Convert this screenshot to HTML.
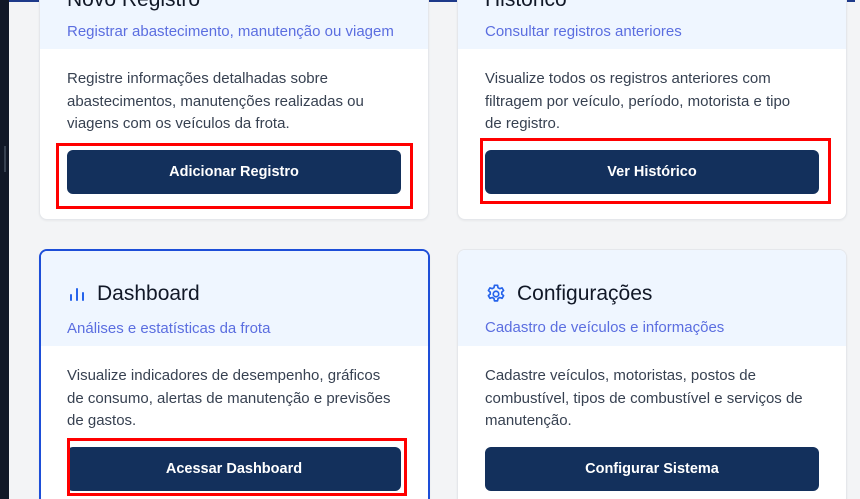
<!DOCTYPE html>
<html><head><meta charset="utf-8"><style>
*{margin:0;padding:0;box-sizing:border-box}
html,body{width:860px;height:499px;overflow:hidden;background:#f3f4f6;font-family:"Liberation Sans",sans-serif;position:relative}
.side{position:absolute;left:0;top:0;width:9px;height:499px;background:#111827}
.side i{position:absolute;left:4px;top:146px;width:2px;height:26px;background:#374151}
.topbar{position:absolute;left:9px;top:0;width:846px;height:2px;background:#1e3a8a}
.card{position:absolute;background:#fff;border:1px solid #e5e7eb;border-radius:8px;overflow:hidden;box-shadow:0 1px 2px rgba(0,0,0,.05)}
.card.sel{border:2px solid #1d4ed8}
.hd{position:absolute;left:0;top:0;right:0;background:#eff6ff}
.t{position:absolute;left:27px;font-size:21px;color:#111827;display:flex;align-items:center;gap:10px;white-space:nowrap}
.s{position:absolute;left:27px;font-size:15px;color:#5b6ee0;white-space:nowrap}
.b{position:absolute;left:27px;font-size:15px;line-height:22.5px;color:#374151;white-space:nowrap}
.sel .t,.sel .s,.sel .b{left:26px}
.btn{position:absolute;background:#13305c;color:#fff;border-radius:6px;font-weight:bold;font-size:14.5px;display:flex;align-items:center;justify-content:center}
.red{position:absolute;border:3px solid #ff0000}
</style></head><body>
<div class="side"><i></i></div>
<div class="topbar"></div>

<div class="card" style="left:39px;top:-20px;width:390px;height:240px">
  <div class="hd" style="height:68px"></div>
  <div class="t" style="top:7px">Novo Registro</div>
  <div class="s" style="top:42px">Registrar abastecimento, manutenção ou viagem</div>
  <div class="b" style="top:87px">Registre informações detalhadas sobre<br>abastecimentos, manutenções realizadas ou<br>viagens com os veículos da frota.</div>
</div>
<div class="card" style="left:457px;top:-20px;width:390px;height:240px">
  <div class="hd" style="height:68px"></div>
  <div class="t" style="top:7px">Histórico</div>
  <div class="s" style="top:42px">Consultar registros anteriores</div>
  <div class="b" style="top:87px">Visualize todos os registros anteriores com<br>filtragem por veículo, período, motorista e tipo<br>de registro.</div>
</div>

<div class="card sel" style="left:39px;top:249px;width:391px;height:270px">
  <div class="hd" style="height:95px"></div>
  <div class="t" style="top:31px"><svg width="20" height="20" viewBox="0 0 20 20"><g stroke="#2563eb" stroke-width="2" stroke-linecap="round"><line x1="4" y1="16" x2="4" y2="11"/><line x1="10" y1="16" x2="10" y2="5"/><line x1="16" y1="16" x2="16" y2="9"/></g></svg><span>Dashboard</span></div>
  <div class="s" style="top:69px">Análises e estatísticas da frota</div>
  <div class="b" style="top:114px">Visualize indicadores de desempenho, gráficos<br>de consumo, alertas de manutenção e previsões<br>de gastos.</div>
</div>
<div class="card" style="left:457px;top:249px;width:390px;height:270px">
  <div class="hd" style="height:96px"></div>
  <div class="t" style="top:32px"><svg width="22" height="22" viewBox="0 0 24 24" fill="none" stroke="#2563eb" stroke-width="1.8" stroke-linejoin="round"><path d="M10.3 2.5h3.4l.5 2.6 1.9 1.1 2.5-.9 1.7 2.9-2 1.7v2.2l2 1.7-1.7 2.9-2.5-.9-1.9 1.1-.5 2.6h-3.4l-.5-2.6-1.9-1.1-2.5.9-1.7-2.9 2-1.7v-2.2l-2-1.7 1.7-2.9 2.5.9 1.9-1.1z"/><circle cx="12" cy="12" r="3"/></svg><span>Configurações</span></div>
  <div class="s" style="top:69px">Cadastro de veículos e informações</div>
  <div class="b" style="top:115px">Cadastre veículos, motoristas, postos de<br>combustível, tipos de combustível e serviços de<br>manutenção.</div>
</div>

<div class="btn" style="left:67px;top:150px;width:334px;height:44px">Adicionar Registro</div>
<div class="btn" style="left:485px;top:150px;width:334px;height:44px">Ver Histórico</div>
<div class="btn" style="left:67px;top:447px;width:334px;height:44px">Acessar Dashboard</div>
<div class="btn" style="left:485px;top:447px;width:334px;height:44px">Configurar Sistema</div>

<div class="red" style="left:56px;top:143px;width:357px;height:66px"></div>
<div class="red" style="left:480px;top:138px;width:351px;height:66px"></div>
<div class="red" style="left:67px;top:438px;width:340px;height:58px"></div>
</body></html>
